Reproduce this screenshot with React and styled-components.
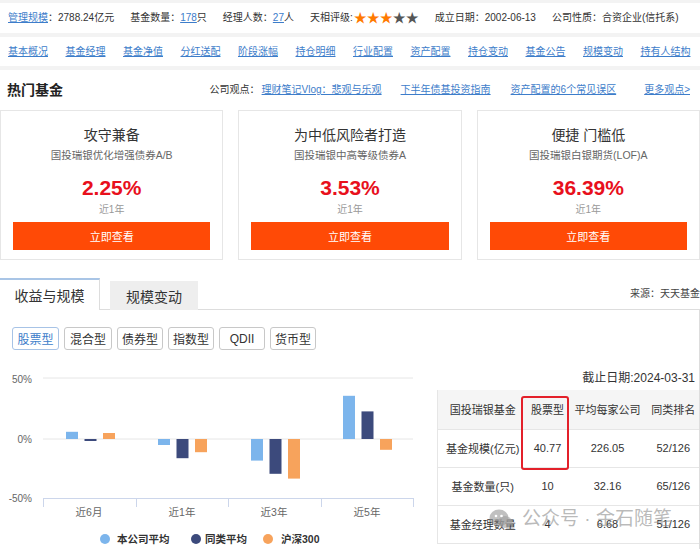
import React from "react";
import styled, { createGlobalStyle } from "styled-components";

const GlobalStyle = createGlobalStyle`
  html, body { margin: 0; padding: 0; }
  body {
    background: #f3f3f3;
    font-family: "Liberation Sans", "Noto Sans CJK SC", sans-serif;
    color: #333;
  }
  * { box-sizing: border-box; }
`;

const Page = styled.div`
  width: 700px;
  height: 549px;
  overflow: hidden;
  padding-top: 3px;
`;

const InfoBar = styled.div`
  height: 30px;
  background: #fff;
  display: flex;
  align-items: center;
  gap: 16px;
  padding-left: 8px;
  font-size: 10px;
  line-height: 14px;
  white-space: nowrap;
`;

const Pair = styled.span`
  display: inline-flex;
  align-items: center;
`;

const Link = styled.a`
  color: #3d7dca;
  text-decoration: underline;
  cursor: pointer;
`;

const Stars = styled.span`
  display: inline-flex;
  font-size: 13px;
  line-height: 14px;
  margin-left: 1px;
`;

const Star = styled.span`
  color: ${(p) => (p.$on ? "#ff7a00" : "#555")};
  width: 13px;
  text-align: center;
`;

const NavBar = styled.div`
  margin-top: 4px;
  height: 29px;
  background: #fff;
  display: flex;
  align-items: center;
  gap: 17.5px;
  padding-left: 8px;
  font-size: 10px;
  line-height: 14px;
  white-space: nowrap;
`;

const Main = styled.div`
  margin-top: 4px;
  background: #fff;
  height: 480px;
`;

const HotHeader = styled.div`
  height: 40px;
  display: flex;
  align-items: center;
  padding: 0 10px 0 7px;
  white-space: nowrap;
`;

const HotTitle = styled.h2`
  margin: 0;
  font-size: 14px;
  font-weight: bold;
  line-height: 18px;
  color: #222;
  flex: 1;
`;

const Views = styled.div`
  display: flex;
  align-items: center;
  font-size: 10px;
  line-height: 14px;
`;

const ViewLink = styled(Link)`
  margin-left: ${(p) => p.$gap || 20}px;
`;

const Cards = styled.div`
  display: grid;
  grid-template-columns: repeat(3, 1fr);
  gap: 15px;
`;

const Card = styled.div`
  height: 150px;
  border: 1px solid #e6e6e6;
  padding: 15px 12px 8px;
  display: flex;
  flex-direction: column;
  align-items: center;
`;

const CardTitle = styled.div`
  font-size: 14px;
  line-height: 18px;
  color: #333;
`;

const CardSub = styled.div`
  margin-top: 4px;
  font-size: 10.5px;
  line-height: 14px;
  color: #666;
`;

const CardPct = styled.div`
  margin-top: 14px;
  font-size: 21px;
  line-height: 24px;
  font-weight: bold;
  color: #e8101c;
`;

const CardPeriod = styled.div`
  margin-top: 3px;
  font-size: 10px;
  line-height: 14px;
  color: #999;
`;

const CardButton = styled.button`
  margin-top: 5px;
  width: 100%;
  height: 28px;
  border: none;
  background: #ff4a06;
  color: #fff;
  font-family: inherit;
  font-size: 11px;
  cursor: pointer;
`;

const TabBar = styled.div`
  margin-top: 18px;
  display: flex;
  align-items: flex-end;
  border-bottom: 1px solid #ddd;
  height: 32px;
`;

const Tab = styled.div`
  width: ${(p) => (p.$active ? 100 : 88)}px;
  height: ${(p) => (p.$active ? 32 : 29)}px;
  margin-left: ${(p) => (p.$active ? 0 : 10)}px;
  margin-bottom: -1px;
  background: ${(p) => (p.$active ? "#fff" : "#eeeeee")};
  border-top: ${(p) => (p.$active ? "2px solid #a9c5e6" : "none")};
  border-right: ${(p) => (p.$active ? "1px solid #ddd" : "none")};
  display: flex;
  align-items: center;
  justify-content: center;
  font-size: 14px;
  color: #333;
`;

const Source = styled.div`
  margin-left: auto;
  align-self: center;
  font-size: 10px;
  line-height: 14px;
  font-weight: normal;
  color: #444;
`;

const Panel = styled.div`
  border-right: 1px solid #ddd;
  height: 240px;
`;

const TypeRow = styled.div`
  display: flex;
  gap: 5px;
  padding: 17px 0 0 12px;
`;

const TypeButton = styled.button`
  height: 23px;
  width: ${(p) => p.$w || 46}px;
  padding: 0;
  border: 1px solid ${(p) => (p.$active ? "#a7c3e6" : "#c8c8c8")};
  border-radius: 3px;
  background: #fff;
  color: ${(p) => (p.$active ? "#3d7dca" : "#333")};
  font-family: inherit;
  font-size: 12px;
  cursor: pointer;
`;

const Content = styled.div`
  margin-top: 11px;
  display: flex;
`;

const ChartSvg = styled.svg`
  display: block;
  flex: none;
  font-family: "Liberation Sans", "Noto Sans CJK SC", sans-serif;
`;

const TableWrap = styled.div`
  position: relative;
  margin-left: 7px;
  flex: 1;
`;

const AsOf = styled.div`
  text-align: right;
  font-size: 12px;
  line-height: 16px;
  padding: 9px 4px 4px 0;
  color: #333;
`;

const Table = styled.table`
  width: 100%;
  border-collapse: collapse;
  table-layout: fixed;
  font-size: 11px;
  color: #333;
  border-left: 1px solid #e6e6e6;
`;

const Th = styled.th`
  height: 39px;
  font-weight: normal;
  background: #f5f5f5;
  border-bottom: 1px solid #e6e6e6;
  white-space: nowrap;
  padding: 0;
`;

const Td = styled.td`
  height: 38px;
  text-align: center;
  border-bottom: 1px solid #e6e6e6;
  white-space: nowrap;
  padding: 0;
`;

const Highlight = styled.div`
  position: absolute;
  left: 84px;
  top: 35px;
  width: 48px;
  height: 74px;
  border: 2px solid #e3202a;
  border-radius: 3px;
  pointer-events: none;
`;

const Watermark = styled.div`
  position: absolute;
  left: 52px;
  top: 146px;
  display: flex;
  align-items: center;
  gap: 9px;
  color: rgba(140, 140, 140, 0.6);
  font-size: 19px;
  line-height: 24px;
  white-space: nowrap;
  pointer-events: none;
`;

const cards = [
  { t: "攻守兼备", s: "国投瑞银优化增强债券A/B", p: "2.25%" },
  { t: "为中低风险者打造", s: "国投瑞银中高等级债券A", p: "3.53%" },
  { t: "便捷 门槛低", s: "国投瑞银白银期货(LOF)A", p: "36.39%" },
];

const navItems = [
  "基本概况", "基金经理", "基金净值", "分红送配", "阶段涨幅", "持仓明细",
  "行业配置", "资产配置", "持仓变动", "基金公告", "规模变动", "持有人结构",
];

const types = [
  { n: "股票型", w: 47, active: true },
  { n: "混合型", w: 48 },
  { n: "债券型", w: 46 },
  { n: "指数型", w: 46 },
  { n: "QDII", w: 46 },
  { n: "货币型", w: 46 },
];

const COLORS = ["#7cb5ec", "#3c4a7c", "#f7a35c"];
const ZERO = 78;
const groups = [
  { label: "近6月", x: 66, v: [6, -1.5, 5] },
  { label: "近1年", x: 158, v: [-5, -16, -11] },
  { label: "近3年", x: 251, v: [-18, -29, -33] },
  { label: "近5年", x: 343, v: [36, 23, -9] },
];
const labelX = [89, 182, 274, 367];

function Chart() {
  return (
    <ChartSvg width="430" height="189" viewBox="0 0 430 189">
      {[17, 78].map((y) => (
        <line key={y} x1="43" x2="413" y1={y} y2={y} stroke="#e6e6e6" strokeWidth="1" />
      ))}
      <line x1="43" x2="413" y1="137.5" y2="137.5" stroke="#ccd6eb" strokeWidth="1" />
      {[43, 136, 228, 321, 413].map((x) => (
        <line key={x} x1={x + 0.5} x2={x + 0.5} y1="137" y2="146" stroke="#ccd6eb" strokeWidth="1" />
      ))}
      <text x="32" y="21.5" textAnchor="end" fontSize="10" fill="#666">50%</text>
      <text x="32" y="81.5" textAnchor="end" fontSize="10" fill="#666">0%</text>
      <text x="32" y="141" textAnchor="end" fontSize="10" fill="#666">-50%</text>
      {groups.map((g, gi) => (
        <g key={g.label}>
          {g.v.map((v, i) => {
            const h = Math.max(2, Math.abs(v) * 1.2);
            const y = v >= 0 ? ZERO - h : ZERO;
            return <rect key={i} x={g.x + i * 18.5} y={y} width="12" height={h} fill={COLORS[i]} />;
          })}
          <text x={labelX[gi]} y="155" textAnchor="middle" fontSize="10.5" fill="#666">{g.label}</text>
        </g>
      ))}
      <g fontSize="10.5" fontWeight="600" fill="#333">
        <circle cx="105" cy="178" r="5" fill={COLORS[0]} />
        <text x="117" y="182">本公司平均</text>
        <circle cx="196" cy="178" r="5" fill={COLORS[1]} />
        <text x="205" y="182">同类平均</text>
        <circle cx="268" cy="178" r="5" fill={COLORS[2]} />
        <text x="281" y="182">沪深300</text>
      </g>
    </ChartSvg>
  );
}

function WeChatIcon() {
  return (
    <svg width="24" height="22" viewBox="0 0 24 22">
      <ellipse cx="10" cy="10" rx="9.5" ry="8.5" fill="rgba(140,140,140,0.55)" />
      <ellipse cx="16" cy="14" rx="7" ry="6" fill="rgba(160,160,160,0.6)" />
      <circle cx="7" cy="8" r="1.3" fill="#fff" />
      <circle cx="12.5" cy="8" r="1.3" fill="#fff" />
    </svg>
  );
}

export default function App() {
  return (
    <>
      <GlobalStyle />
      <Page>
        <InfoBar>
          <Pair><Link>管理规模</Link>：2788.24亿元</Pair>
          <Pair>基金数量：<Link>178</Link>只</Pair>
          <Pair>经理人数：<Link>27</Link>人</Pair>
          <Pair>
            天相评级:
            <Stars>
              {[1, 2, 3, 4, 5].map((i) => (
                <Star key={i} $on={i <= 3}>★</Star>
              ))}
            </Stars>
          </Pair>
          <Pair>成立日期：2002-06-13</Pair>
          <Pair>公司性质：合资企业(信托系)</Pair>
        </InfoBar>
        <NavBar>
          {navItems.map((n) => (
            <Link key={n}>{n}</Link>
          ))}
        </NavBar>
        <Main>
          <HotHeader>
            <HotTitle>热门基金</HotTitle>
            <Views>
              <span>公司观点：</span>
              <ViewLink $gap={2}>理财笔记Vlog：悲观与乐观</ViewLink>
              <ViewLink $gap={19}>下半年债基投资指南</ViewLink>
              <ViewLink $gap={20}>资产配置的6个常见误区</ViewLink>
              <ViewLink $gap={28}>更多观点&gt;</ViewLink>
            </Views>
          </HotHeader>
          <Cards>
            {cards.map((c) => (
              <Card key={c.t}>
                <CardTitle>{c.t}</CardTitle>
                <CardSub>{c.s}</CardSub>
                <CardPct>{c.p}</CardPct>
                <CardPeriod>近1年</CardPeriod>
                <CardButton>立即查看</CardButton>
              </Card>
            ))}
          </Cards>
          <TabBar>
            <Tab $active>收益与规模</Tab>
            <Tab>规模变动</Tab>
            <Source>来源：天天基金</Source>
          </TabBar>
          <Panel>
            <TypeRow>
              {types.map((t) => (
                <TypeButton key={t.n} $w={t.w} $active={t.active}>{t.n}</TypeButton>
              ))}
            </TypeRow>
            <Content>
              <Chart />
              <TableWrap>
                <AsOf>截止日期:2024-03-31</AsOf>
                <Table>
                  <colgroup>
                    <col style={{ width: 90 }} />
                    <col style={{ width: 40 }} />
                    <col style={{ width: 80 }} />
                    <col />
                  </colgroup>
                  <thead>
                    <tr>
                      <Th>国投瑞银基金</Th>
                      <Th>股票型</Th>
                      <Th>平均每家公司</Th>
                      <Th>同类排名</Th>
                    </tr>
                  </thead>
                  <tbody>
                    <tr>
                      <Td>基金规模(亿元)</Td>
                      <Td>40.77</Td>
                      <Td>226.05</Td>
                      <Td>52/126</Td>
                    </tr>
                    <tr>
                      <Td>基金数量(只)</Td>
                      <Td>10</Td>
                      <Td>32.16</Td>
                      <Td>65/126</Td>
                    </tr>
                    <tr>
                      <Td>基金经理数量</Td>
                      <Td>4</Td>
                      <Td>6.68</Td>
                      <Td>51/126</Td>
                    </tr>
                  </tbody>
                </Table>
                <Highlight />
                <Watermark>
                  <WeChatIcon />
                  <span>公众号 · 金石随笔</span>
                </Watermark>
              </TableWrap>
            </Content>
          </Panel>
        </Main>
      </Page>
    </>
  );
}
